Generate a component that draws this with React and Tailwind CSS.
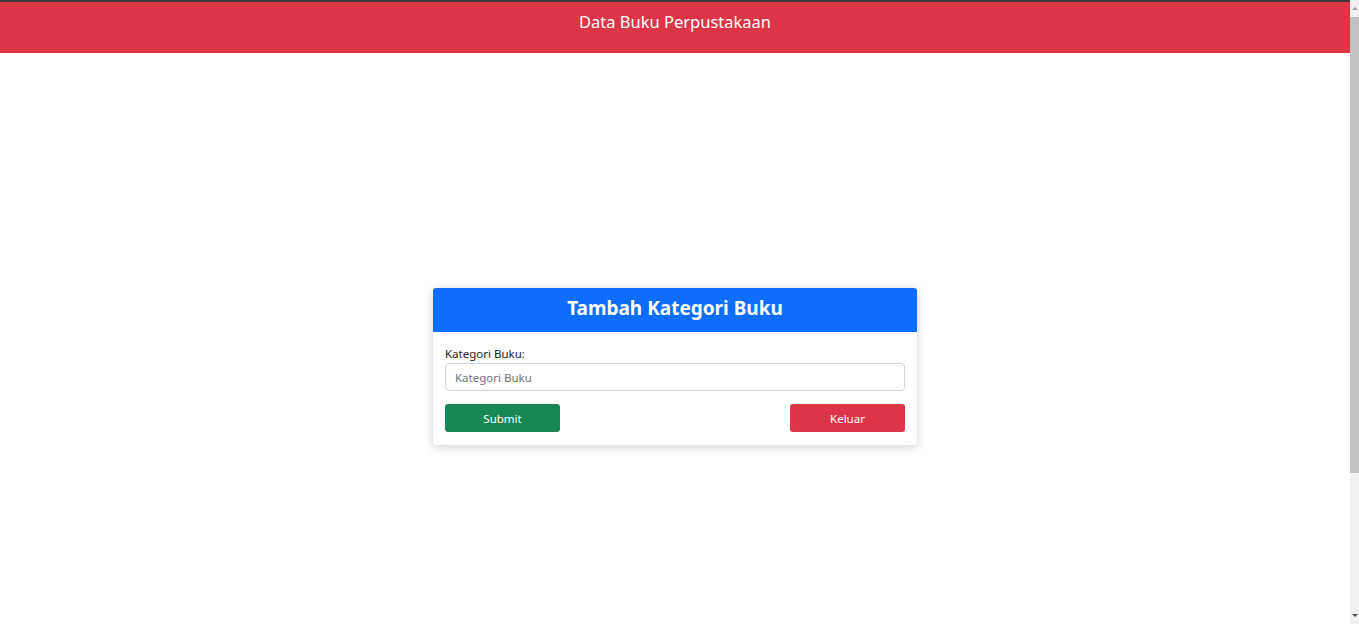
import React from "react";

const font = { fontFamily: '"Segoe UI", "Noto Sans", "Open Sans", sans-serif' };

export default function App() {
  return (
    <div className="flex h-[624px] w-full overflow-hidden bg-white" style={font}>
      <div className="flex flex-1 flex-col">
        <div className="h-[2px] bg-[#3a3a3a]" />
        {/* navbar */}
        <header className="flex h-[51px] justify-center bg-[#dc3545] pt-[9px]">
          <span className="text-[16.5px] leading-[22px] text-white">Data Buku Perpustakaan</span>
        </header>

        <main className="flex flex-1 justify-center pt-[235px]">
          <div className="h-fit w-[484px] rounded-[3px] bg-white shadow-[0_2px_10px_rgba(0,0,0,0.18)]">
            <div className="flex h-[44px] items-center justify-center rounded-t-[3px] bg-[#0d6efd] pb-[3px]">
              <h1 className="text-[19px] font-bold text-white">Tambah Kategori Buku</h1>
            </div>
            <form className="px-[12px] pt-[14px] pb-[13px]">
              <label className="block text-[11.5px] leading-[16px] text-[#212529]">Kategori Buku:</label>
              <input
                type="text"
                placeholder="Kategori Buku"
                className="mt-[1px] h-[28px] w-full rounded-[4px] border border-[#ced4da] px-[9px] text-[11.5px] text-[#212529] placeholder:text-[#6c757d] outline-none"
              />
              <div className="mt-[13px] flex justify-between">
                <button
                  type="button"
                  className="h-[28px] w-[115px] rounded-[3px] bg-[#198754] pt-[1px] text-[11.5px] text-white"
                >
                  Submit
                </button>
                <button
                  type="button"
                  className="h-[28px] w-[115px] rounded-[3px] bg-[#dc3545] pt-[1px] text-[11.5px] text-white"
                >
                  Keluar
                </button>
              </div>
            </form>
          </div>
        </main>
      </div>

      {/* scrollbar */}
      <div className="flex w-[9px] flex-col bg-[#f0f0f0]">
        <div className="flex h-[17px] items-center justify-center">
          <div className="h-0 w-0 border-x-[3px] border-b-[3px] border-x-transparent border-b-[#a3a3a3]" />
        </div>
        <div className="h-[456px] bg-[#c1c1c1]" />
        <div className="flex-1" />
        <div className="flex h-[17px] items-center justify-center">
          <div className="h-0 w-0 border-x-[3px] border-t-[3px] border-x-transparent border-t-[#505050]" />
        </div>
      </div>
    </div>
  );
}
